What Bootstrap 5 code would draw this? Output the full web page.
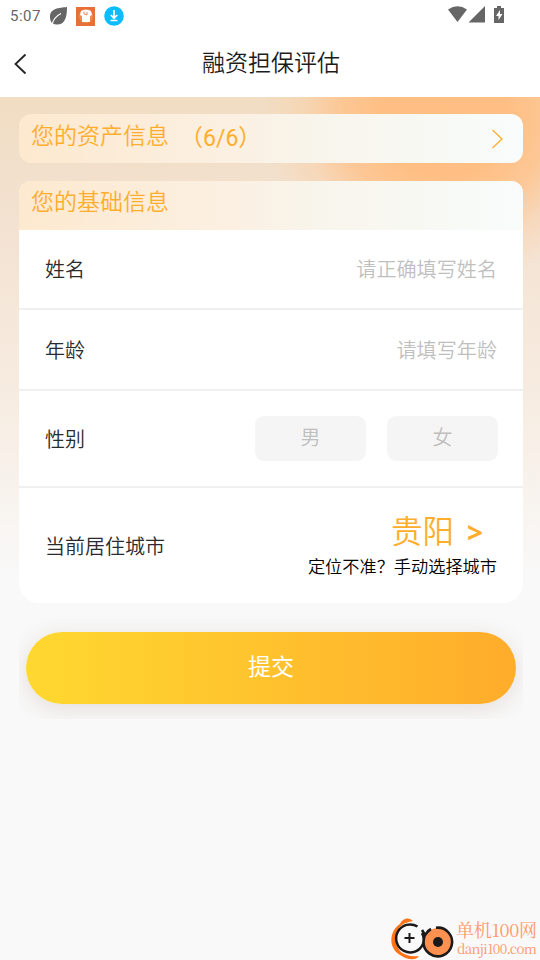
<!DOCTYPE html>
<html lang="zh-CN">
<head>
<meta charset="utf-8">
<meta name="viewport" content="width=device-width, initial-scale=1">
<title>融资担保评估</title>
<link href="https://cdn.jsdelivr.net/npm/bootstrap@5.3.0/dist/css/bootstrap.min.css" rel="stylesheet">
<style>
body{font-family:"Noto Sans CJK SC",sans-serif;font-weight:350;background:#f9f9f9;height:960px;overflow:hidden;color:#2b2b2b}
.status-bar{height:32px;font:15px/32px Roboto,sans-serif;color:#666;letter-spacing:.5px;padding-left:10px;padding-right:35px}
.title-bar{height:65px;padding-left:13px;padding-bottom:2px}
.title-bar h1{font-size:23px;line-height:34px;font-weight:350;margin:0;padding-right:25px;padding-bottom:5px;color:#1c1c1c}
.page-body{height:863px;padding:17px 17px 0 19px;background:
 radial-gradient(ellipse 180px 170px at 445px 20px,#ffbe82 0,#ffbf84 35%,rgba(255,193,136,.8) 57%,rgba(255,200,150,.35) 78%,rgba(255,205,160,0) 100%),
 linear-gradient(#f1ddc2 0,#f3e1d0 110px,#f7ece1 300px,#f9f9f9 480px,#f9f9f9)}
.section-head{height:49px;background:linear-gradient(90deg,#fde9cf,#fbf0e2 42%,#f8f5ec 60%,#f8fcfb);color:#ffad2d;font-size:23px;line-height:39px;padding-left:12px;padding-right:19px}
.asset-link{border-radius:12px;margin-bottom:18px;line-height:40px}
.step-count{margin-left:11px;padding-top:6px;line-height:38px;font-family:Roboto,"Noto Sans CJK SC",sans-serif;font-weight:400}
.form-card{border-radius:12px 12px 20px 20px;height:422px;overflow:hidden}
.form-line{border-bottom:2px solid #f0f0f0;padding:0 26px;font-size:20px;line-height:30px}
.line-name{height:80px}.line-name>span{padding-bottom:1px}
.line-age{height:81px}.line-sex{height:97px;padding-right:25px}.line-city{height:115px;border:0}
.hint{color:#bfbfbf;font-size:20.1px}
.sex-option{width:111px;height:45px;border-radius:9px;background:#f5f5f5;color:#bfbfbf;font-size:20px;font-weight:350;line-height:40px;padding:0 0 3px;border:0}
.city-name{font-size:31.5px;line-height:42px;color:#ffad2d;padding-right:14px;margin-top:-5px;margin-bottom:3px}
.city-arrow{font:700 28px/30px "Noto Sans",sans-serif;margin-left:13px}
.city-note{font-size:17.2px;line-height:26px;color:#000}
.submit-area{height:116px;padding:29px 7px 15px;overflow:hidden}
.submit-area .btn{height:72px;border:0;border-radius:36px;background:linear-gradient(90deg,#ffd830,#ffac2b);color:#fff;font-size:23px;font-weight:400;line-height:34px;padding:0 0 6px;box-shadow:0 5px 24px rgba(100,55,35,.14)}
.site-mark{left:389px;top:915px}
.site-mark text{font-family:"Noto Serif CJK SC","Noto Sans CJK SC",sans-serif;fill:#ff9868;font-weight:400}
</style>
<script src="https://cdn.jsdelivr.net/npm/bootstrap@5.3.0/dist/js/bootstrap.bundle.min.js"></script>
</head>
<body>
<header class="bg-white">
 <div class="status-bar d-flex align-items-center">
  <span>5:07</span>
  <svg class="ms-2" width="19" height="20" viewBox="0 0 19 20"><path d="M18 1C10 2 1 2 1 11c0 3 1 5 2 6q3 2 6 1.500C17 18 18 9 18 1Z" fill="#666"/><path d="M3 19C4 14 7 10 12 7.500" stroke="#fff" stroke-width="1.200" fill="none"/></svg>
  <svg class="ms-2" width="19" height="19" viewBox="0 0 19 19"><path fill="#e87038" d="M0 0h19v19H0z"/><circle cx="10" cy="9" r="7" fill="#f08a55"/><path d="M5 4q5-2.500 10 0l1 4-2 1v6h-8V9L4 8Z" fill="#fff"/><path d="M8 4.500V7l3 1V5" stroke="#f08a55" fill="none"/></svg>
  <svg style="margin-left:9px" width="20" height="20" viewBox="0 0 20 20"><circle cx="10" cy="10" r="9.800" fill="#0bbdff"/><path d="M10 4v8M6.800 9l3.200 3.200L13.200 9M6.500 14.500h7" stroke="#fff" stroke-width="1.700" fill="none"/></svg>
  <svg class="ms-auto" width="57" height="20" viewBox="448 6 57 20"><path d="M448 9.500Q457.500 3 467 9.500L457.500 22ZM468.500 22.500 485 6v16.500Z" fill="#666"/><path d="M494 8h3V6h4v2h3v15h-10Z" fill="#666"/><path d="m500 10-4 6h2.500v4l4-6H500Z" fill="#fff"/></svg>
 </div>
 <div class="title-bar d-flex align-items-center">
  <svg width="14" height="22" viewBox="0 0 14 22"><path d="m12.500 1.500-10 9.500 10 9.500" fill="none" stroke="#222" stroke-width="1.800"/></svg>
  <h1 class="flex-fill text-center">融资担保评估</h1>
 </div>
</header>
<main class="page-body">
 <div class="section-head asset-link d-flex">
  <span>您的资产信息</span><span class="step-count">（6/6）</span>
  <svg class="ms-auto align-self-center" width="13" height="22" viewBox="0 0 13 22"><path d="m1.500 2 9.500 9-9.500 9" fill="none" stroke="#ffad2d" stroke-width="1.300"/></svg>
 </div>
 <section class="form-card bg-white">
  <div class="section-head">您的基础信息</div>
  <div class="form-line line-name d-flex justify-content-between align-items-center"><span>姓名</span><span class="hint">请正确填写姓名</span></div>
  <div class="form-line line-age d-flex justify-content-between align-items-center"><span>年龄</span><span class="hint">请填写年龄</span></div>
  <div class="form-line line-sex d-flex align-items-center"><span class="me-auto">性别</span><button class="btn sex-option">男</button><button class="btn sex-option" style="margin-left:21px">女</button></div>
  <div class="form-line line-city d-flex justify-content-between align-items-center"><span>当前居住城市</span>
   <div class="text-end"><div class="city-name">贵阳<span class="city-arrow">&gt;</span></div><div class="city-note">定位不准？手动选择城市</div></div>
  </div>
 </section>
 <div class="submit-area"><button class="btn w-100">提交</button></div>
</main>
<svg class="site-mark position-absolute" width="151" height="45" viewBox="389 915 151 45">
 <path d="M413 921c-5-5-11-2-13 3-10 6-13 23 0 31 7 5 16 6 19 1-8 1-14-1-18-4-7-7-7-18-1-25 3-4 9-5 13-6Z" fill="#ff7417"/>
 <path d="M417.500 926.500A14 14 0 1 0 423 944" fill="#f9f9f9" stroke="#1c191b" stroke-width="2.500"/>
 <circle cx="438" cy="942" r="14" fill="#ff9150"/>
 <path d="M436 927.800A14.300 14.300 0 1 1 430 930M422 930l3 5q2-4 6-6M423 944q2-6-1-11" fill="none" stroke="#1c191b" stroke-width="2.600"/>
 <circle cx="438" cy="942" r="5" fill="#1c191b"/>
 <path d="M404.500 938h10M409.500 933v10" stroke="#1c191b" stroke-width="2"/>
 <text x="456" y="936.500" font-size="18" textLength="81">单机100网</text><text x="457" y="954" font-size="13.500" textLength="80">danji100.com</text>
</svg>
</body>
</html>
